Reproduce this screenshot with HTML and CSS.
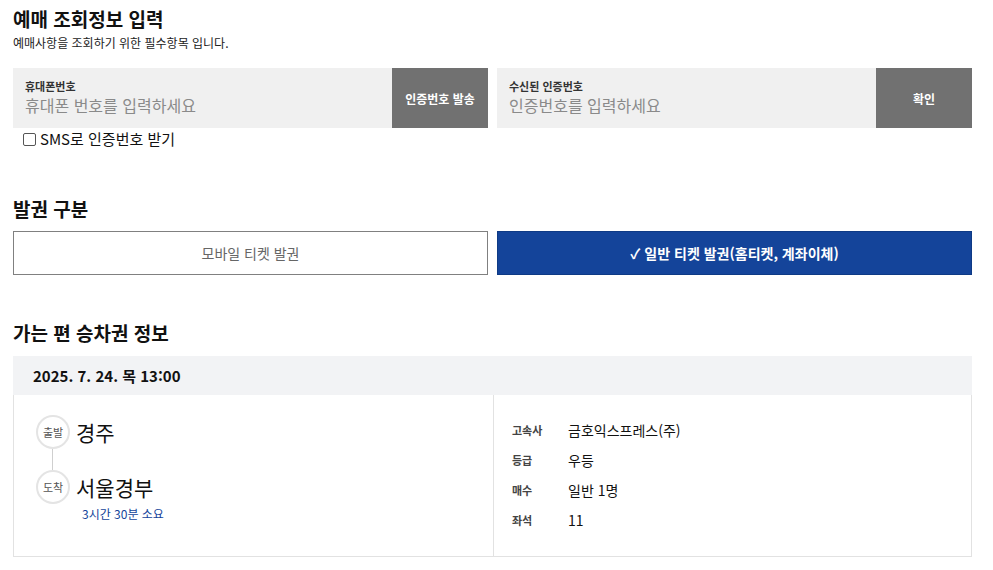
FILE: index.html
```html
<!DOCTYPE html>
<html lang="ko">
<head>
<meta charset="utf-8">
<link rel="stylesheet" href="styles.css">
</head>
<body>
<div class="page">
  <section class="sec sec-verify">
    <h2 class="title">예매 조회정보 입력</h2>
    <p class="desc">예매사항을 조회하기 위한 필수항목 입니다.</p>
    <div class="inputs">
      <div class="field">
        <div class="field-body">
          <div class="label">휴대폰번호</div>
          <div class="placeholder">휴대폰 번호를 입력하세요</div>
        </div>
        <div class="btn-gray">인증번호 발송</div>
      </div>
      <div class="field">
        <div class="field-body">
          <div class="label">수신된 인증번호</div>
          <div class="placeholder">인증번호를 입력하세요</div>
        </div>
        <div class="btn-gray">확인</div>
      </div>
    </div>
    <label class="sms"><span class="box"></span>SMS로 인증번호 받기</label>
  </section>

  <section class="sec sec-type">
    <h2 class="title">발권 구분</h2>
    <div class="types">
      <div class="type">모바일 티켓 발권</div>
      <div class="type active">✓ 일반 티켓 발권(홈티켓, 계좌이체)</div>
    </div>
  </section>

  <section class="sec sec-ticket">
    <h2 class="title">가는 편 승차권 정보</h2>
    <div class="card">
      <div class="card-head">2025. 7. 24. 목 13:00</div>
      <div class="card-body">
        <div class="route">
          <div class="stop">
            <span class="dot">출발</span>
            <span class="place">경주</span>
          </div>
          <div class="link"></div>
          <div class="stop">
            <span class="dot">도착</span>
            <span class="place">서울경부</span>
          </div>
          <div class="dur">3시간 30분 소요</div>
        </div>
        <div class="info">
          <div class="row"><span class="k">고속사</span><span class="v">금호익스프레스(주)</span></div>
          <div class="row"><span class="k">등급</span><span class="v">우등</span></div>
          <div class="row"><span class="k">매수</span><span class="v">일반 1명</span></div>
          <div class="row"><span class="k">좌석</span><span class="v">11</span></div>
        </div>
      </div>
    </div>
  </section>
</div>
</body>
</html>
```

FILE: styles.css
```css
* { box-sizing: border-box; }
html, body { margin: 0; padding: 0; background: #fff; }
body {
  font-family: "Noto Sans CJK KR", "Noto Sans", sans-serif;
  color: #111;
}
.page {
  width: 959px;
  margin-left: 13px;
  padding-top: 5px;
}
.title {
  margin: 0;
  font-size: 19px;
  font-weight: 700;
  line-height: 28px;
  color: #111;
}
.desc {
  margin: 1px 0 0;
  font-size: 12px;
  line-height: 18px;
  color: #222;
}
.inputs {
  display: grid;
  grid-template-columns: 1fr 1fr;
  gap: 9px;
  margin-top: 16px;
}
.field {
  display: flex;
  height: 60px;
  background: #f0f0f0;
}
.field-body {
  flex: 1;
  padding: 9px 12px 0;
}
.label {
  font-size: 11px;
  font-weight: 700;
  line-height: 18px;
  color: #333;
}
.placeholder {
  font-size: 16px;
  line-height: 20px;
  color: #8a8a8a;
}
.btn-gray {
  width: 96px;
  background: #717171;
  color: #fff;
  font-size: 12px;
  font-weight: 700;
  display: flex;
  align-items: center;
  justify-content: center;
}
.sms {
  display: flex;
  align-items: center;
  margin: 1px 0 0 10px;
  font-size: 15px;
  line-height: 20px;
  color: #111;
}
.box {
  width: 13px;
  height: 13px;
  border: 1px solid #555;
  border-radius: 2px;
  margin-right: 4px;
}
.sec-type { margin-top: 46px; }
.types {
  display: grid;
  grid-template-columns: 1fr 1fr;
  gap: 9px;
  margin-top: 8px;
}
.type {
  height: 44px;
  border: 1px solid #808080;
  display: flex;
  align-items: center;
  justify-content: center;
  font-size: 14px;
  color: #666;
}
.type.active {
  background: #14449a;
  border-color: #0e3a85;
  color: #fff;
  font-weight: 700;
}
.sec-ticket { margin-top: 44px; }
.card {
  margin-top: 9px;
  border: 1px solid #e2e2e2;
  border-top: 0;
}
.card-head {
  height: 39px;
  background: #f2f3f5;
  padding-left: 20px;
  display: flex;
  align-items: center;
  font-size: 15px;
  font-weight: 700;
  margin: 0 -1px;
}
.card-body {
  display: grid;
  grid-template-columns: 480px 1fr;
  height: 161px;
}
.route {
  padding: 20px 0 0 22px;
  border-right: 1px solid #e2e2e2;
}
.stop {
  display: flex;
  align-items: center;
}
.dot {
  width: 34px;
  height: 34px;
  border-radius: 50%;
  border: 2px solid #e4e4e4;
  display: flex;
  align-items: center;
  justify-content: center;
  font-size: 11px;
  color: #555;
  background: #fff;
}
.place {
  margin-left: 6px;
  font-size: 21px;
  line-height: 28px;
  color: #111;
}
.link {
  width: 1px;
  height: 21px;
  background: #cfcfcf;
  margin-left: 16px;
}
.dur {
  margin: 2px 0 0 46px;
  font-size: 12px;
  line-height: 16px;
  color: #14449a;
}
.info {
  padding: 20px 0 0 18px;
}
.row {
  display: flex;
  align-items: center;
  height: 30px;
}
.k {
  width: 56px;
  font-size: 11px;
  font-weight: 700;
  color: #444;
}
.v {
  font-size: 14px;
  color: #111;
}
```
